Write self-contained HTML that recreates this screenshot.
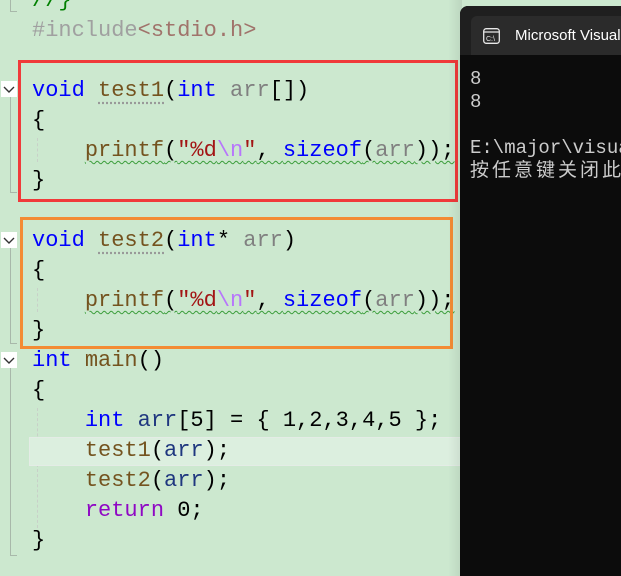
<!DOCTYPE html>
<html><head><meta charset="utf-8"><style>
*{margin:0;padding:0;box-sizing:border-box}
body{width:621px;height:576px;overflow:hidden;background:#cce8cf;position:relative;font-family:"Liberation Mono","DejaVu Sans Mono",monospace}
.l{position:absolute;left:32px;font-size:22px;line-height:30px;height:30px;white-space:pre;color:#000;margin-top:3px}
.k{color:#0000ff}.f{color:#74531f}.p{color:#808080}.s{color:#a31515}.e{color:#b776fb}.r{color:#8f08c4}.v{color:#1f377f}.inc{color:#a0a0a0}.inc2{color:#a0736b}.c{color:#008000}
.sq{text-decoration:underline wavy #3a9d3a;text-decoration-thickness:1px;text-underline-offset:4px}
.fold{position:absolute;left:1px;width:16px;height:16px;background:#fff}
.fold svg{display:block}
.g{position:absolute;left:10px;width:1px;background:#a8b8aa}
.gh{position:absolute;left:10px;height:1px;width:7px;background:#a8b8aa}
.ig{position:absolute;left:37px;width:0;border-left:1px dashed #c8d0c8}
.box{position:absolute}
</style></head><body>
<div class="g" style="top:0;height:12px"></div><div class="gh" style="top:11px"></div>
<div class="l c" style="top:-17px">//}</div>
<div class="l" style="top:13px"><span class="inc">#include</span><span class="inc2">&lt;stdio.h&gt;</span></div>

<div class="fold" style="top:81px"><svg width="16" height="16"><path d="M3 6 L8 11 L13 6" fill="none" stroke="#333" stroke-width="1.4"/></svg></div>
<div class="g" style="top:97px;height:96px"></div><div class="gh" style="top:192px"></div>
<div class="ig" style="top:138px;height:24px"></div>
<div class="l" style="top:73px"><span class="k">void</span> <span class="f" style="text-decoration:underline dotted #999;text-underline-offset:6px">test1</span>(<span class="k">int</span> <span class="p">arr</span>[])</div>
<div class="l" style="top:103px">{</div>
<div class="l" style="top:133px">    <span class="sq"><span class="f">printf</span>(<span class="s">"%d</span><span class="e">\n</span><span class="s">"</span>, <span class="k">sizeof</span>(<span class="p">arr</span>));</span></div>
<div class="l" style="top:163px">}</div>
<div class="box" style="left:18px;top:60px;width:440px;height:142px;border:3px solid #f03a3a"></div>

<div class="fold" style="top:232px"><svg width="16" height="16"><path d="M3 6 L8 11 L13 6" fill="none" stroke="#333" stroke-width="1.4"/></svg></div>
<div class="g" style="top:248px;height:96px"></div><div class="gh" style="top:343px"></div>
<div class="ig" style="top:288px;height:24px"></div>
<div class="l" style="top:223px"><span class="k">void</span> <span class="f" style="text-decoration:underline dotted #999;text-underline-offset:6px">test2</span>(<span class="k">int</span>* <span class="p">arr</span>)</div>
<div class="l" style="top:253px">{</div>
<div class="l" style="top:283px">    <span class="sq"><span class="f">printf</span>(<span class="s">"%d</span><span class="e">\n</span><span class="s">"</span>, <span class="k">sizeof</span>(<span class="p">arr</span>));</span></div>
<div class="l" style="top:313px">}</div>
<div class="box" style="left:20px;top:217px;width:433px;height:132px;border:3px solid #f38b34"></div>

<div class="fold" style="top:352px"><svg width="16" height="16"><path d="M3 6 L8 11 L13 6" fill="none" stroke="#333" stroke-width="1.4"/></svg></div>
<div class="g" style="top:368px;height:188px"></div><div class="gh" style="top:555px"></div>
<div class="ig" style="top:408px;height:120px"></div>
<div style="position:absolute;left:29px;top:437px;width:440px;height:29px;background:#dcefdf;border:1px solid #e4ece6"></div>
<div class="l" style="top:343px"><span class="k">int</span> <span class="f">main</span>()</div>
<div class="l" style="top:373px">{</div>
<div class="l" style="top:403px">    <span class="k">int</span> <span class="v">arr</span>[5] = { 1,2,3,4,5 };</div>
<div class="l" style="top:433px">    <span class="f">test1</span>(<span class="v">arr</span>);</div>
<div class="l" style="top:463px">    <span class="f">test2</span>(<span class="v">arr</span>);</div>
<div class="l" style="top:493px">    <span class="r">return</span> 0;</div>
<div class="l" style="top:523px">}</div>

<div style="position:absolute;left:448px;top:0;width:14px;height:576px;background:linear-gradient(90deg,rgba(0,0,0,0),rgba(0,0,0,.08))"></div>
<div style="position:absolute;left:460px;top:6px;width:170px;height:570px;background:#0c0c0c;border-radius:8px 0 0 0;overflow:hidden">
 <div style="position:absolute;left:0;top:0;width:100%;height:49px;background:#1f1f1f"></div>
 <div style="position:absolute;left:11px;top:10px;width:200px;height:39px;background:#2b2b2b;border-radius:6px 6px 0 0"></div>
 <svg style="position:absolute;left:23px;top:22px" width="17" height="16"><rect x="0.7" y="0.7" width="15.6" height="14.6" rx="2.5" fill="none" stroke="#e8e8e8" stroke-width="1.3"/><line x1="1" y1="4" x2="16" y2="4" stroke="#e8e8e8" stroke-width="1.2"/><text x="3" y="13" font-size="7" fill="#e8e8e8" font-family="Liberation Sans">C:\</text></svg>
 <div style="position:absolute;left:55px;top:21px;font:15px 'Liberation Sans',sans-serif;color:#fff;white-space:nowrap">Microsoft Visual Studio</div>
 <div style="position:absolute;left:10px;top:62px;font-size:19px;line-height:23px;color:#cccccc;white-space:pre;font-family:'Liberation Mono','Noto Sans CJK SC',monospace">8
8

E:\major\visual
<span style="letter-spacing:3px">按任意键关闭此</span></div>
</div>
</body></html>
